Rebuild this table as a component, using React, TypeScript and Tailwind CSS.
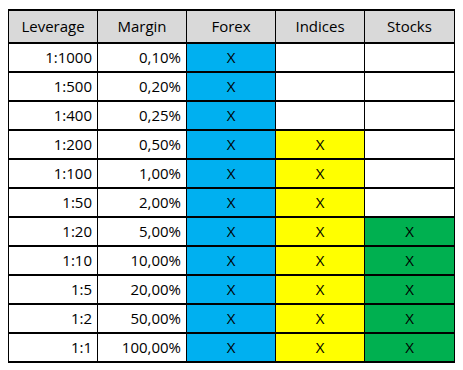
import React from "react";

const rows: [string, string, boolean, boolean, boolean][] = [
  ["1:1000", "0,10%", true, false, false],
  ["1:500", "0,20%", true, false, false],
  ["1:400", "0,25%", true, false, false],
  ["1:200", "0,50%", true, true, false],
  ["1:100", "1,00%", true, true, false],
  ["1:50", "2,00%", true, true, false],
  ["1:20", "5,00%", true, true, true],
  ["1:10", "10,00%", true, true, true],
  ["1:5", "20,00%", true, true, true],
  ["1:2", "50,00%", true, true, true],
  ["1:1", "100,00%", true, true, true],
];

export default function App() {
  return (
    <div className="w-[463px] h-[370px] bg-white pt-[9px] pl-[8px]" style={{ fontFamily: "'Open Sans', 'Noto Sans', sans-serif" }}>
      <div className="grid grid-cols-[88px_88px_88px_88px_89px] grid-rows-[31px_repeat(11,27px)] gap-x-px gap-y-[2px] bg-black px-px py-[2px] w-[447px] text-[15px] font-medium text-black">
        {["Leverage", "Margin", "Forex", "Indices", "Stocks"].map((h) => (
          <div key={h} className="bg-[#d9d9d9] flex items-center justify-center">{h}</div>
        ))}
        {rows.map(([lev, mar, f, i, s]) => (
          <React.Fragment key={lev}>
            <div className="bg-white flex items-center justify-end pr-[5px]">{lev}</div>
            <div className="bg-white flex items-center justify-end pr-[5px]">{mar}</div>
            <div className={`${f ? "bg-[#00b0f0]" : "bg-white"} flex items-center justify-center`}>{f ? "X" : ""}</div>
            <div className={`${i ? "bg-[#ffff00]" : "bg-white"} flex items-center justify-center`}>{i ? "X" : ""}</div>
            <div className={`${s ? "bg-[#00b050]" : "bg-white"} flex items-center justify-center`}>{s ? "X" : ""}</div>
          </React.Fragment>
        ))}
      </div>
    </div>
  );
}
